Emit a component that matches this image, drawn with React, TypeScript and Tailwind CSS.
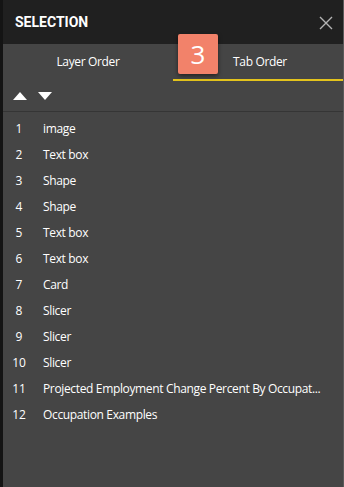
import React from 'react';

const items = [
  'image',
  'Text box',
  'Shape',
  'Shape',
  'Text box',
  'Text box',
  'Card',
  'Slicer',
  'Slicer',
  'Slicer',
  'Projected Employment Change Percent By Occupat...',
  'Occupation Examples',
];

export default function App() {
  return (
    <div
      className="flex h-[487px] w-[344px] flex-col border-l-[3px] border-r border-l-[#141414] border-r-[#5a5a5a] bg-[#454545] text-white"
      style={{ fontFamily: '"Open Sans", "Noto Sans", sans-serif' }}
    >
      <div className="flex h-[44px] shrink-0 items-center justify-between bg-[#202020] pl-3 pr-[10px]">
        <span className="text-[14px] font-bold" style={{ fontFamily: 'Roboto, sans-serif' }}>
          SELECTION
        </span>
        <svg width="14" height="14" viewBox="0 0 14 14" className="mt-[1px]">
          <path d="M1 1L13 13M13 1L1 13" stroke="#b4b4b4" strokeWidth="1.4" />
        </svg>
      </div>

      <div className="relative flex h-[37px] shrink-0 text-[12px] tracking-[-0.35px]">
        <div className="flex w-[170px] items-center justify-center pb-[2px]">Layer Order</div>
        <div className="flex flex-1 items-center justify-center border-b-2 border-[#e3c31c] pl-[4px]">Tab Order</div>
        <div className="absolute left-[175px] top-[-10px] flex h-[40px] w-[40px] items-center justify-center rounded-[2px] bg-[#f2826a] text-[26px] leading-none tracking-normal shadow-[0_2px_4px_rgba(0,0,0,0.5)]">
          3
        </div>
      </div>

      <div className="flex h-[31px] shrink-0 items-center gap-[11px] border-b border-[#353535] pl-[10px]">
        <svg width="14" height="8" viewBox="0 0 14 8">
          <path d="M0 8L7 0L14 8Z" fill="#fff" />
        </svg>
        <svg width="14" height="8" viewBox="0 0 14 8">
          <path d="M0 0L7 8L14 0Z" fill="#fff" />
        </svg>
      </div>

      <div className="flex flex-col pt-[4px] text-[12px]">
        {items.map((name, i) => (
          <div key={i} className="flex h-[26px] items-center">
            <span className="w-[31px] shrink-0 pl-[1px] text-center">{i + 1}</span>
            <span className="whitespace-nowrap pl-[9px] tracking-[-0.35px]">{name}</span>
          </div>
        ))}
      </div>
    </div>
  );
}
